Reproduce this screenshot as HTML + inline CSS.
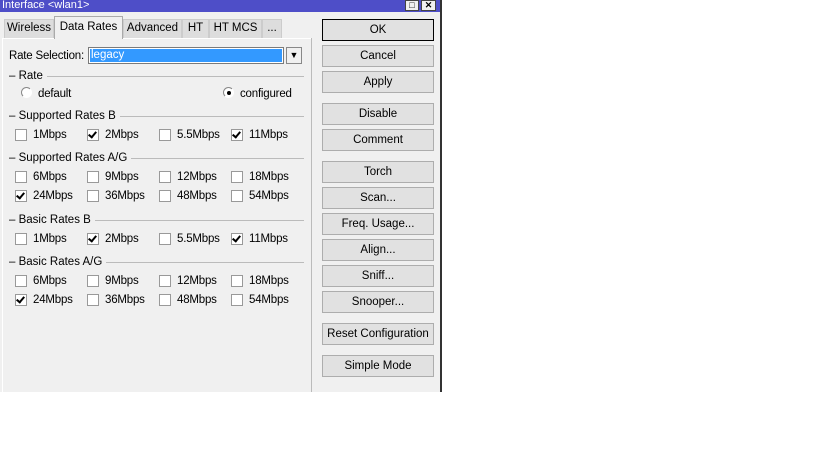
<!DOCTYPE html>
<html><head><style>
*{margin:0;padding:0;box-sizing:border-box}
body{width:819px;height:460px;background:#fff;font-family:"Liberation Sans",Arial,sans-serif;font-size:11px;color:#000;position:relative;overflow:hidden}
.a{position:absolute}
.win{left:0;top:0;width:442px;height:392px;background:#f0f0f0;border-right:2px solid #333}
.title{left:0;top:0;width:440px;height:12px;background:#4e4ec8;color:#fff;font-size:11px;line-height:11px;padding-left:2px}
.tb{top:0;width:14px;height:11px;background:#f0f0f0;border:1px solid #444;font-size:9px;line-height:9px;text-align:center;font-weight:bold}
.tab{top:19px;height:19px;background:#ddd;border:1px solid #ccc;border-bottom:none;line-height:17px;text-align:center;font-size:11.5px}
.tab.sel{top:16px;height:23px;background:#f0f0f0;border-color:#aaa;line-height:21px;z-index:2}
.panel{left:2px;top:38px;width:310px;height:354px;border:1px solid #fff;border-bottom:none;border-right:1px solid #ccc}
.btn{left:322px;width:112px;height:22px;background:#e1e1e1;border:1px solid #adadad;text-align:center;line-height:20px;font-size:11.5px}
.grp{left:9px;height:12px;font-size:11.5px;line-height:12px}
.grp span{background:#f0f0f0;padding:0 4px 0 0}
.line{height:1px;background:#bbb}
.cb{width:12px;height:12px;background:#fff;border:1px solid #999}
.cb.c::after{content:"";position:absolute;left:2px;top:0px;width:3px;height:6px;border:solid #000;border-width:0 2px 2px 0;transform:rotate(40deg)}
.lbl{font-size:11.5px;line-height:12px;letter-spacing:-0.2px}
</style></head><body>
<div class="a win"></div>
<div class="a title">Interface &lt;wlan1&gt;</div>
<div class="a tb" style="left:405px">&#9633;</div>
<div class="a tb" style="left:421px;width:15px">✕</div>
<div class="a panel"></div>
<div class="a" style="left:311px;top:38px;width:1px;height:354px;background:#bbb"></div>
<div class="a tab" style="left:4px;width:50px">Wireless</div>
<div class="a tab sel" style="left:54px;width:69px">Data Rates</div>
<div class="a tab" style="left:123px;width:59px">Advanced</div>
<div class="a tab" style="left:182px;width:27px">HT</div>
<div class="a tab" style="left:209px;width:53px">HT MCS</div>
<div class="a tab" style="left:262px;width:20px">...</div>

<div class="a lbl" style="left:9px;top:50px">Rate Selection:</div>
<div class="a" style="left:88px;top:47px;width:196px;height:17px;background:#3399ff;border:1px solid #7a7a7a;color:#fff;font-size:11.5px;line-height:15px;padding-left:2px;box-shadow:inset 0 0 0 1px #fff">legacy</div>
<div class="a" style="left:286px;top:47px;width:16px;height:17px;background:#f0f0f0;border:1px solid #888;font-size:9px;line-height:15px;text-align:center">&#9660;</div>

<div id="g"></div>
<script>
var h='';
function grp(t,y){h+='<div class="a line" style="left:9px;width:295px;top:'+(y+6)+'px"></div><div class="a grp" style="top:'+y+'px"><span>&ndash; '+t+'</span></div>';}
function row(y,items){var xs=[15,87,159,231];items.forEach(function(it,i){h+='<div class="a cb'+(it[1]?' c':'')+'" style="left:'+xs[i]+'px;top:'+(y-6)+'px"></div><div class="a lbl" style="left:'+(xs[i]+18)+'px;top:'+(y-6)+'px">'+it[0]+'</div>';});}
grp('Rate',70);
h+='<div class="a" style="left:21px;top:87px;width:11px;height:11px;border-radius:50%;background:#fff;border:1px solid #888;border-right-color:#fff;border-bottom-color:#fff"></div><div class="a lbl" style="left:38px;top:88px">default</div>';
h+='<div class="a" style="left:223px;top:87px;width:11px;height:11px;border-radius:50%;background:#fff;border:1px solid #888;border-right-color:#fff;border-bottom-color:#fff"><div style="position:absolute;left:3px;top:3px;width:4px;height:4px;border-radius:50%;background:#000"></div></div><div class="a lbl" style="left:240px;top:88px">configured</div>';
grp('Supported Rates B',110);
row(135,[['1Mbps',0],['2Mbps',1],['5.5Mbps',0],['11Mbps',1]]);
grp('Supported Rates A/G',152);
row(177,[['6Mbps',0],['9Mbps',0],['12Mbps',0],['18Mbps',0]]);
row(196,[['24Mbps',1],['36Mbps',0],['48Mbps',0],['54Mbps',0]]);
grp('Basic Rates B',214);
row(239,[['1Mbps',0],['2Mbps',1],['5.5Mbps',0],['11Mbps',1]]);
grp('Basic Rates A/G',256);
row(281,[['6Mbps',0],['9Mbps',0],['12Mbps',0],['18Mbps',0]]);
row(300,[['24Mbps',1],['36Mbps',0],['48Mbps',0],['54Mbps',0]]);
var b=[['OK',19],['Cancel',45],['Apply',71],['Disable',103],['Comment',129],['Torch',161],['Scan...',187],['Freq. Usage...',213],['Align...',239],['Sniff...',265],['Snooper...',291],['Reset Configuration',323],['Simple Mode',355]];
b.forEach(function(x,i){h+='<div class="a btn" style="top:'+x[1]+'px;'+(i==0?'border:1px solid #000;':'')+'">'+x[0]+'</div>';});
document.getElementById('g').innerHTML=h;
</script>
</body></html>
